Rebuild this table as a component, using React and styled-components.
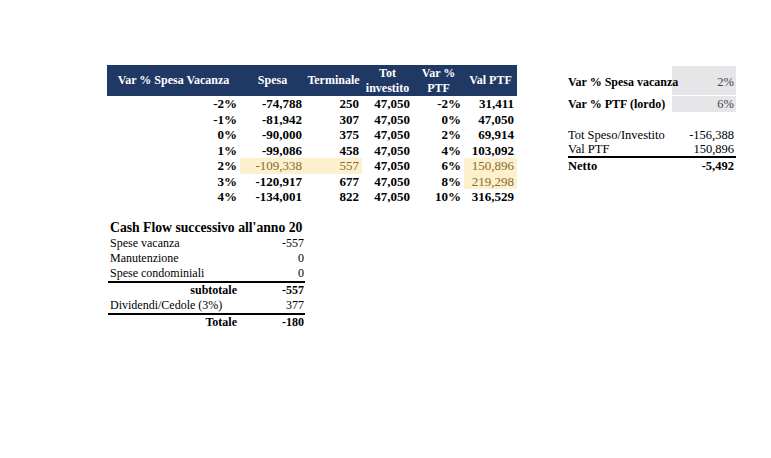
import React from 'react';
import styled, { createGlobalStyle } from 'styled-components';

const GlobalStyle = createGlobalStyle`
  body {
    margin: 0;
    background: #ffffff;
    font-family: 'Liberation Serif', 'Times New Roman', serif;
    color: #000;
  }
`;

// data rows of the sensitivity table
const rows = [
  { v: '-2%', spesa: '-74,788', term: '250', tot: '47,050', ptf: '-2%', val: '31,411' },
  { v: '-1%', spesa: '-81,942', term: '307', tot: '47,050', ptf: '0%', val: '47,050' },
  { v: '0%', spesa: '-90,000', term: '375', tot: '47,050', ptf: '2%', val: '69,914' },
  { v: '1%', spesa: '-99,086', term: '458', tot: '47,050', ptf: '4%', val: '103,092' },
  { v: '2%', spesa: '-109,338', term: '557', tot: '47,050', ptf: '6%', val: '150,896', hiRow: true, hiVal: true },
  { v: '3%', spesa: '-120,917', term: '677', tot: '47,050', ptf: '8%', val: '219,298', hiVal: true },
  { v: '4%', spesa: '-134,001', term: '822', tot: '47,050', ptf: '10%', val: '316,529' },
];

const cashFlow = [
  { label: 'Spese vacanza', value: '-557' },
  { label: 'Manutenzione', value: '0' },
  { label: 'Spese condominiali', value: '0', line: true },
  { label: 'subtotale', value: '-557', total: true },
  { label: 'Dividendi/Cedole (3%)', value: '377', line: true },
  { label: 'Totale', value: '-180', total: true },
];

const Page = styled.div`
  display: flex;
  align-items: flex-start;
  padding: 65px 0 0 107px;
`;

const LeftColumn = styled.div`
  display: flex;
  flex-direction: column;
  width: 410px;
`;

const Sheet = styled.table`
  width: 410px;
  table-layout: fixed;
  border-collapse: collapse;
  font-size: 13px;
`;

const HeadCell = styled.th`
  background: #203864;
  color: #fff;
  font-weight: 700;
  font-size: 12px;
  line-height: 15px;
  height: 31px;
  padding: 0;
  text-align: center;
  vertical-align: middle;
  white-space: nowrap;
`;

const Cell = styled.td`
  height: 15.5px;
  padding: 0 3px 0 0;
  line-height: 15.5px;
  text-align: right;
  font-weight: ${(p) => (p.hi ? 400 : 700)};
  background: ${(p) => (p.hi ? '#fcf0cd' : 'transparent')};
  color: ${(p) => (p.hi ? '#8a6a2c' : '#000')};
  white-space: nowrap;
`;

const CashBlock = styled.div`
  margin: 15px 0 0 1px;
  width: 197px;
`;

const CashTitle = styled.div`
  font-weight: 700;
  font-size: 13.7px;
  line-height: 16px;
  padding-left: 2px;
  white-space: nowrap;
`;

const CashRow = styled.div`
  display: grid;
  grid-template-columns: 132px 65px;
  height: 15px;
  line-height: 15px;
  font-size: 12px;
  border-bottom: ${(p) => (p.line ? '2px solid #000' : 'none')};
`;

const CashLabel = styled.span`
  padding: ${(p) => (p.total ? '0 3px 0 0' : '0 0 0 2px')};
  text-align: ${(p) => (p.total ? 'right' : 'left')};
  font-weight: ${(p) => (p.total ? 700 : 400)};
  white-space: nowrap;
`;

const CashValue = styled.span`
  text-align: right;
  padding-right: 1px;
  font-weight: ${(p) => (p.total ? 700 : 400)};
`;

const SidePanel = styled.div`
  margin: 1px 0 0 51px;
  width: 168px;
  display: flex;
  flex-direction: column;
  font-size: 12.5px;
`;

const InputRow = styled.div`
  display: grid;
  grid-template-columns: 104px 64px;
  height: ${(p) => p.h}px;
  margin-bottom: 1px;
`;

const InputLabel = styled.span`
  position: relative;
  z-index: 1;
  align-self: center;
  padding-top: ${(p) => p.drop || 0}px;
  font-weight: 700;
  font-size: 12px;
  white-space: nowrap;
`;

const InputValue = styled.span`
  display: flex;
  align-items: center;
  justify-content: flex-end;
  padding: ${(p) => p.drop || 0}px 2px 0 0;
  background: #e6e5e8;
  color: #444;
`;

const SummaryRow = styled.div`
  display: flex;
  justify-content: space-between;
  height: 14px;
  line-height: 14px;
  padding-right: 2px;
  font-weight: ${(p) => (p.bold ? 700 : 400)};
  border-bottom: ${(p) => (p.line ? '2px solid #000' : 'none')};
  margin-top: ${(p) => p.gap || 0}px;
`;

export default function App() {
  return (
    <>
      <GlobalStyle />
      <Page>
        <LeftColumn>
          <Sheet>
            <colgroup>
              <col style={{ width: 133 }} />
              <col style={{ width: 65 }} />
              <col style={{ width: 57 }} />
              <col style={{ width: 51 }} />
              <col style={{ width: 51 }} />
              <col style={{ width: 53 }} />
            </colgroup>
            <thead>
              <tr>
                <HeadCell>Var % Spesa Vacanza</HeadCell>
                <HeadCell>Spesa</HeadCell>
                <HeadCell>Terminale</HeadCell>
                <HeadCell>Tot<br />investito</HeadCell>
                <HeadCell>Var %<br />PTF</HeadCell>
                <HeadCell>Val PTF</HeadCell>
              </tr>
            </thead>
            <tbody>
              {rows.map((r) => (
                <tr key={r.v}>
                  <Cell>{r.v}</Cell>
                  <Cell hi={r.hiRow}>{r.spesa}</Cell>
                  <Cell hi={r.hiRow}>{r.term}</Cell>
                  <Cell>{r.tot}</Cell>
                  <Cell>{r.ptf}</Cell>
                  <Cell hi={r.hiVal}>{r.val}</Cell>
                </tr>
              ))}
            </tbody>
          </Sheet>

          <CashBlock>
            <CashTitle>Cash Flow successivo all'anno 20</CashTitle>
            {cashFlow.map((c) => (
              <CashRow key={c.label} line={c.line}>
                <CashLabel total={c.total}>{c.label}</CashLabel>
                <CashValue total={c.total}>{c.value}</CashValue>
              </CashRow>
            ))}
          </CashBlock>
        </LeftColumn>

        <SidePanel>
          <InputRow h={29}>
            <InputLabel drop={3}>Var % Spesa vacanza</InputLabel>
            <InputValue drop={3}>2%</InputValue>
          </InputRow>
          <InputRow h={16}>
            <InputLabel>Var % PTF (lordo)</InputLabel>
            <InputValue>6%</InputValue>
          </InputRow>
          <SummaryRow gap={15}>
            <span>Tot Speso/Investito</span>
            <span>-156,388</span>
          </SummaryRow>
          <SummaryRow line>
            <span>Val PTF</span>
            <span>150,896</span>
          </SummaryRow>
          <SummaryRow bold gap={1}>
            <span>Netto</span>
            <span>-5,492</span>
          </SummaryRow>
        </SidePanel>
      </Page>
    </>
  );
}
